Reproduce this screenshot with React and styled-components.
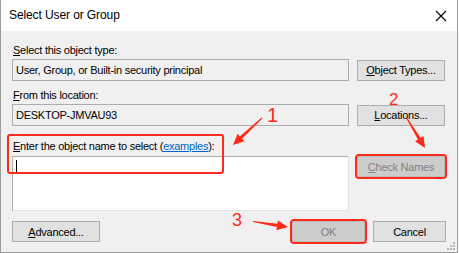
import React from 'react';
import styled, { createGlobalStyle } from 'styled-components';

const RED = '#ff2a1a';

const GlobalStyle = createGlobalStyle`
  html, body {
    margin: 0;
    padding: 0;
    background: #ffffff;
  }
  body {
    font-family: 'Liberation Sans', Arial, sans-serif;
    font-size: 11px;
    letter-spacing: -0.25px;
    color: #000;
  }
`;

// tapered arrow: thin tail, wider shaft, triangular head
function arrowPoints(x1, y1, x2, y2, head = 11, headW = 5, tail = 0.5, shaft = 1.6) {
  const dx = x2 - x1;
  const dy = y2 - y1;
  const len = Math.hypot(dx, dy);
  const ux = dx / len;
  const uy = dy / len;
  const nx = -uy;
  const ny = ux;
  const bx = x2 - ux * head;
  const by = y2 - uy * head;
  const pts = [
    [x1 + nx * tail, y1 + ny * tail],
    [bx + nx * shaft, by + ny * shaft],
    [bx + nx * headW, by + ny * headW],
    [x2, y2],
    [bx - nx * headW, by - ny * headW],
    [bx - nx * shaft, by - ny * shaft],
    [x1 - nx * tail, y1 - ny * tail],
  ];
  return pts.map((p) => p.map((v) => v.toFixed(1)).join(',')).join(' ');
}

function App() {
  return (
    <>
      <GlobalStyle />
      <Window>
        <TitleBar>
          <Title>Select User or Group</Title>
          <CloseIcon width="12" height="12" viewBox="0 0 12 12">
            <path d="M1 1 L11 11 M11 1 L1 11" stroke="#000" strokeWidth="1.1" />
          </CloseIcon>
        </TitleBar>

        <Body>
          <Label>
            <u>S</u>elect this object type:
          </Label>
          <Row>
            <Field>User, Group, or Built-in security principal</Field>
            <Button>
              <u>O</u>bject Types...
            </Button>
          </Row>

          <Label $gap={7}>
            <u>F</u>rom this location:
          </Label>
          <Row>
            <Field>DESKTOP-JMVAU93</Field>
            <Button>
              <u>L</u>ocations...
            </Button>
          </Row>

          <Label $gap={13} $after={3}>
            <u>E</u>nter the object name to select (<Link>examples</Link>):
          </Label>
          <Row $top>
            <TextArea>
              <Caret />
            </TextArea>
            <Button disabled $marked>
              <u>C</u>heck Names
            </Button>
          </Row>

          <Footer>
            <Button>
              <u>A</u>dvanced...
            </Button>
            <FooterRight>
              <Button disabled $marked $width={73}>
                OK
              </Button>
              <Button $width={73}>Cancel</Button>
            </FooterRight>
          </Footer>
        </Body>

        <Grip width="8" height="8" viewBox="0 0 8 8">
          {[
            [6, 0],
            [3, 3],
            [6, 3],
            [0, 6],
            [3, 6],
            [6, 6],
          ].map(([x, y]) => (
            <rect key={`${x}-${y}`} x={x} y={y} width="2" height="2" fill="#b8b8b8" />
          ))}
        </Grip>

        <Highlight />
        <StepNumber $x={266} $y={105} $size={20}>1</StepNumber>
        <StepNumber $x={388} $y={91} $size={17}>2</StepNumber>
        <StepNumber $x={231} $y={211} $size={18}>3</StepNumber>
        <Arrows width="458" height="253" viewBox="0 0 458 253">
          <polygon points={arrowPoints(262, 118, 233, 145)} fill={RED} />
          <polygon points={arrowPoints(406, 117, 425, 148)} fill={RED} />
          <polygon points={arrowPoints(253, 221.5, 288, 227)} fill={RED} />
        </Arrows>
      </Window>
    </>
  );
}

const Window = styled.div`
  position: relative;
  width: 458px;
  height: 253px;
  box-sizing: border-box;
  border-left: 1px solid #9c9c9c;
  border-right: 1px solid #9c9c9c;
  border-bottom: 1px solid #9c9c9c;
  background: #f0f0f0;
  display: flex;
  flex-direction: column;
`;

const TitleBar = styled.div`
  height: 31px;
  flex: none;
  background: #ffffff;
  display: flex;
  align-items: center;
  justify-content: space-between;
  padding: 0 10px 0 8px;
`;

const Title = styled.span`
  font-size: 12px;
  letter-spacing: -0.1px;
  color: #000;
  margin-top: -1px;
`;

const CloseIcon = styled.svg`
  display: block;
`;

const Body = styled.div`
  flex: 1;
  display: flex;
  flex-direction: column;
  padding: 12px 11px 0 11px;
`;

const Label = styled.div`
  height: 14px;
  line-height: 14px;
  margin-top: ${({ $gap }) => $gap || 0}px;
  margin-bottom: ${({ $after }) => ($after === undefined ? 2 : $after)}px;
  padding-left: 1px;
  white-space: nowrap;
`;

const Link = styled.span`
  color: #0066cc;
  text-decoration: underline;
`;

const Row = styled.div`
  display: flex;
  align-items: ${({ $top }) => ($top ? 'flex-start' : 'center')};
  gap: 8px;
`;

const Field = styled.div`
  width: 337px;
  height: 22px;
  box-sizing: border-box;
  border: 1px solid #adadad;
  background: #f0f0f0;
  display: flex;
  align-items: center;
  padding-left: 3px;
  white-space: nowrap;
`;

const TextArea = styled.div`
  width: 337px;
  height: 55px;
  box-sizing: border-box;
  border: 1px solid #adadad;
  border-right-color: #e3e3e3;
  border-bottom-color: #e3e3e3;
  background: #ffffff;
  padding: 3px 0 0 3px;
`;

const Caret = styled.div`
  width: 1px;
  height: 13px;
  background: #000;
`;

const Button = styled.div`
  width: ${({ $width }) => $width || 88}px;
  height: 21px;
  box-sizing: border-box;
  border: 1px solid ${({ disabled }) => (disabled ? '#bfbfbf' : '#adadad')};
  background: ${({ disabled }) => (disabled ? '#cccccc' : '#e1e1e1')};
  color: ${({ disabled }) => (disabled ? '#838383' : '#000')};
  display: flex;
  align-items: center;
  justify-content: center;
  white-space: nowrap;
  flex: none;
  outline: ${({ $marked }) => ($marked ? `2px solid ${RED}` : 'none')};
  outline-offset: 0px;
  border-radius: ${({ $marked }) => ($marked ? '2px' : '0')};
`;

const Footer = styled.div`
  margin-top: 10px;
  display: flex;
  justify-content: space-between;
  align-items: center;
`;

const FooterRight = styled.div`
  display: flex;
  gap: 8px;
`;

const Grip = styled.svg`
  position: absolute;
  right: 2px;
  bottom: 2px;
`;

const Highlight = styled.div`
  position: absolute;
  left: 6px;
  top: 134px;
  width: 217px;
  height: 40px;
  box-sizing: border-box;
  border: 2px solid ${RED};
  border-radius: 3px;
  pointer-events: none;
`;

const StepNumber = styled.span`
  position: absolute;
  left: ${({ $x }) => $x}px;
  top: ${({ $y }) => $y}px;
  font-size: ${({ $size }) => $size}px;
  letter-spacing: 0;
  line-height: 1;
  color: ${RED};
`;

const Arrows = styled.svg`
  position: absolute;
  left: -1px;
  top: 0;
  pointer-events: none;
`;

export default App;
